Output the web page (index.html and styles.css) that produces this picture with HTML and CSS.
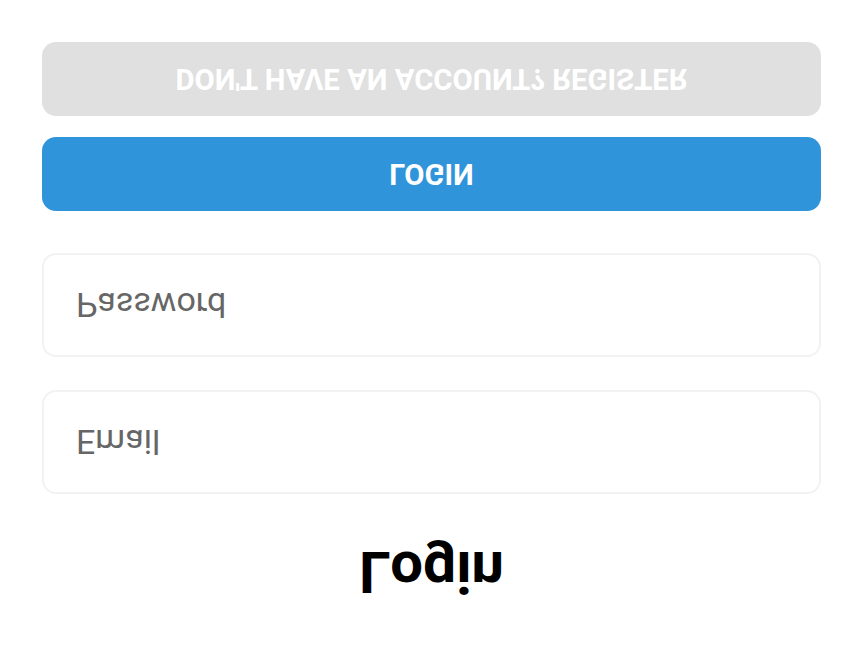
FILE: index.html
```html
<!DOCTYPE html>
<html>
<head>
<meta charset="utf-8">
<link rel="stylesheet" href="styles.css">
</head>
<body>
<div class="screen">
  <h1 class="title">Login</h1>
  <div class="field"><span class="placeholder">Email</span></div>
  <div class="field"><span class="placeholder">Password</span></div>
  <div class="btn btn-primary">LOGIN</div>
  <div class="btn btn-secondary">DON'T HAVE AN ACCOUNT? REGISTER</div>
</div>
</body>
</html>
```
FILE: styles.css
```css
html, body {
  margin: 0;
  padding: 0;
  background: #ffffff;
}
body {
  width: 864px;
  height: 648px;
  overflow: hidden;
  font-family: Roboto, "Liberation Sans", sans-serif;
}
.screen {
  height: 648px;
  box-sizing: border-box;
  padding: 48px 43px 0 42px;
  display: flex;
  flex-direction: column;
  transform: scaleY(-1);
}
.title {
  margin: 0;
  height: 56px;
  line-height: 56px;
  text-align: center;
  font-size: 58px;
  font-weight: 700;
  color: #000;
}
.field {
  margin-top: 50px;
  height: 104px;
  box-sizing: border-box;
  border: 2px solid #f2f2f2;
  border-radius: 14px;
  display: flex;
  align-items: center;
  padding-left: 32px;
}
.field + .field {
  margin-top: 33px;
}
.placeholder {
  font-size: 34px;
  color: #666;
}
.btn {
  height: 74px;
  border-radius: 14px;
  display: flex;
  align-items: center;
  justify-content: center;
  color: #fff;
  font-size: 29.3px;
  font-weight: 700;
}
.btn-primary {
  margin-top: 42px;
  background: #3094db;
}
.btn-secondary {
  margin-top: 21px;
  background: #e0e0e0;
}
```
